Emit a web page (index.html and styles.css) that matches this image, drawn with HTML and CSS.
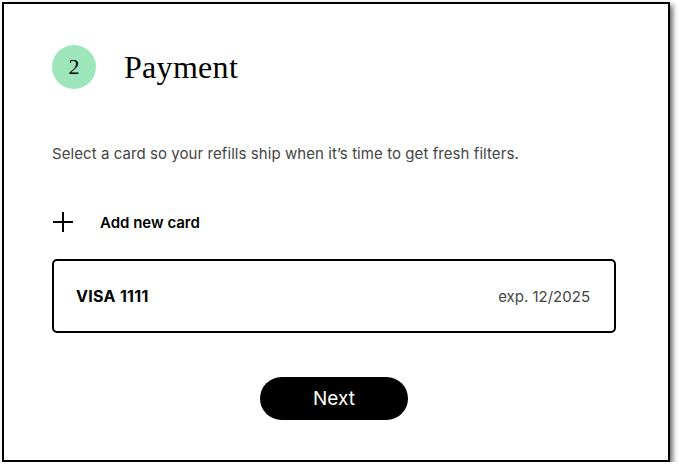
FILE: index.html
```html
<!DOCTYPE html>
<html lang="en">
<head>
  <meta charset="UTF-8" />
  <meta name="viewport" content="width=device-width, initial-scale=1.0"/>
  <title>Payment</title>
  <link rel="stylesheet" href="styles.css">
</head>
<body>
  <div class="panel">
    <div class="step-head">
      <span class="step-num">2</span>
      <h2>Payment</h2>
    </div>

    <p class="hint">Select a card so your refills ship when it’s time to get fresh filters.</p>

    <button class="add-card">
      <svg width="22" height="22" viewBox="0 0 22 22">
        <path d="M11 1v20M1 11h20" stroke="#000" stroke-width="2" fill="none"/>
      </svg>
      <span>Add new card</span>
    </button>

    <div class="card-row">
      <span class="card-name">VISA 1111</span>
      <span class="card-exp">exp. 12/2025</span>
    </div>

    <div class="actions">
      <button class="next-btn">Next</button>
    </div>
  </div>
</body>
</html>
```

FILE: styles.css
```css
body {
  margin: 0;
  background-color: #fff;
  font-family: Inter, 'Liberation Sans', sans-serif;
  color: #000;
}

.panel {
  box-sizing: border-box;
  width: 668px;
  height: 460px;
  margin: 2px 0 0 2px;
  padding: 41px 52px 0 48px;
  border: 2px solid #000;
  background-color: #fff;
  box-shadow: 3px 3px 5px rgba(0, 0, 0, 0.55);
}

.step-head {
  display: flex;
  align-items: center;
  gap: 28px;
}

.step-num {
  display: flex;
  align-items: center;
  justify-content: center;
  width: 44px;
  height: 44px;
  border-radius: 50%;
  background-color: #9de6b9;
  font-family: 'Liberation Serif', serif;
  font-size: 22px;
}

h2 {
  margin: 0;
  font-family: 'Liberation Serif', serif;
  font-weight: normal;
  font-size: 32px;
  letter-spacing: 0.3px;
}

.hint {
  margin: 54px 0 0;
  font-size: 15px;
  line-height: 22px;
  letter-spacing: 0.07px;
  color: #444;
}

.add-card {
  display: flex;
  align-items: center;
  gap: 26px;
  margin-top: 46px;
  padding: 0;
  border: none;
  background: none;
  font-family: inherit;
  font-size: 15px;
  font-weight: 600;
  color: #000;
  cursor: pointer;
}

.card-row {
  display: flex;
  justify-content: space-between;
  align-items: center;
  box-sizing: border-box;
  height: 74px;
  margin-top: 26px;
  padding: 0 24px 0 22px;
  border: 2px solid #000;
  border-radius: 5px;
  font-size: 15px;
}

.card-name {
  font-size: 16px;
  font-weight: 700;
  letter-spacing: 0.3px;
}

.card-exp {
  color: #444;
}

.actions {
  display: flex;
  justify-content: center;
  margin-top: 44px;
}

.next-btn {
  width: 148px;
  height: 43px;
  border: none;
  border-radius: 22px;
  background-color: #000;
  color: #fff;
  font-family: inherit;
  font-size: 19px;
  cursor: pointer;
}
```
